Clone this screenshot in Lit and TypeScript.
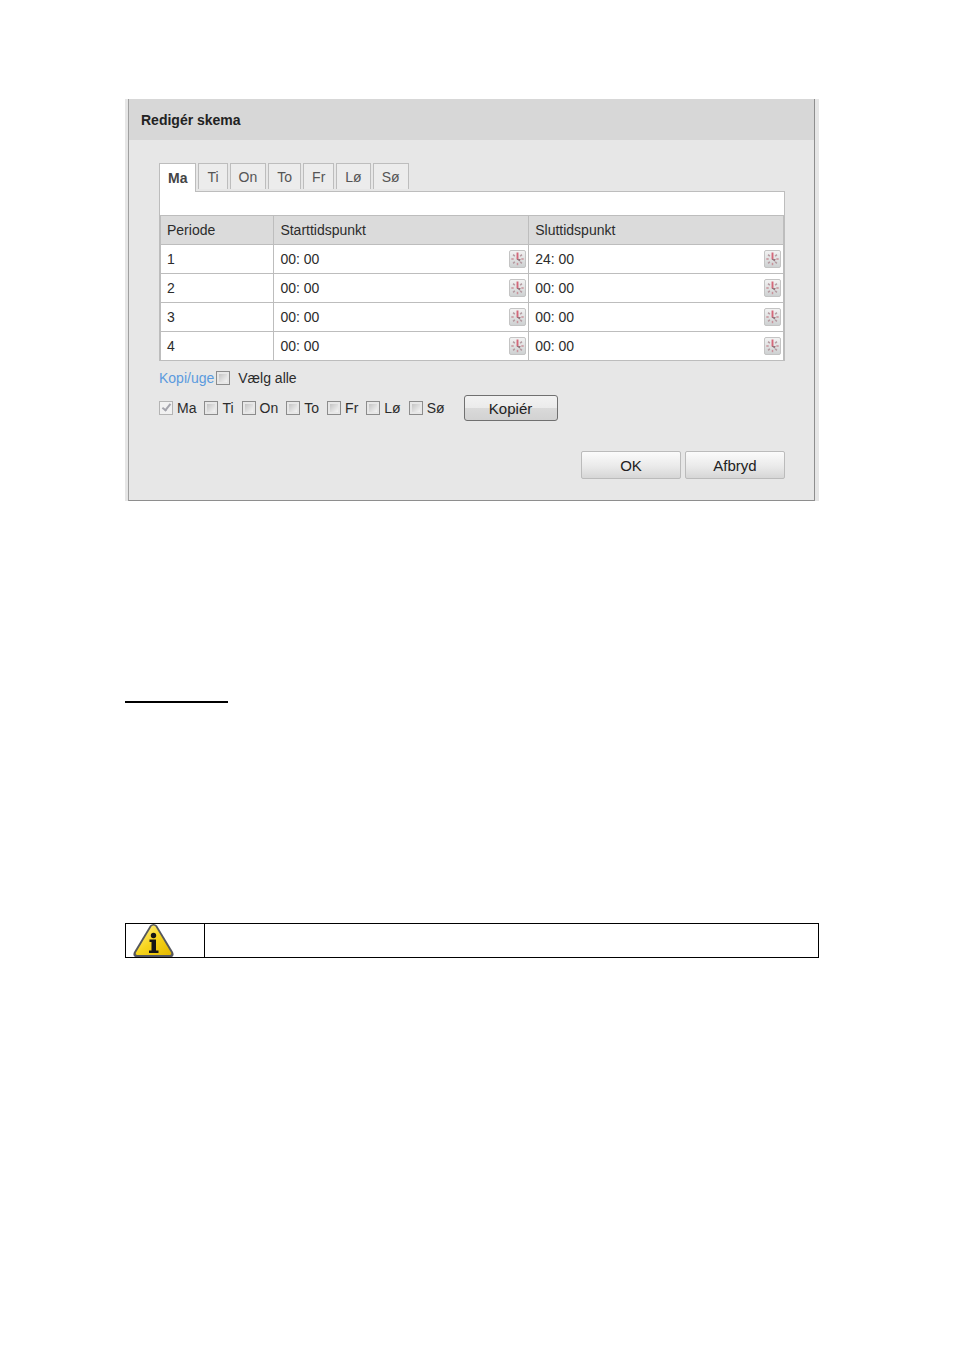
import { LitElement, html, css, svg } from "lit";
import { customElement, state } from "lit/decorators.js";

const DAYS = ["Ma", "Ti", "On", "To", "Fr", "Lø", "Sø"];

const PERIODS = [
  { id: 1, start: "00: 00", end: "24: 00" },
  { id: 2, start: "00: 00", end: "00: 00" },
  { id: 3, start: "00: 00", end: "00: 00" },
  { id: 4, start: "00: 00", end: "00: 00" },
];

const SPOKES = [45, 90, 135, 180, 225, 270, 315];

@customElement("time-field")
class TimeField extends LitElement {
  static properties = { value: {}, label: {} };
  declare value: string;
  declare label: string;

  static styles = css`
    :host {
      display: flex;
      align-items: center;
      height: 28px;
    }
    input {
      flex: 1;
      min-width: 0;
      padding: 0;
      border: 0;
      outline: 0;
      background: transparent;
      color: #2c2c2c;
      font: 14px "Liberation Sans", Arial, sans-serif;
    }
    button {
      display: block;
      flex: none;
      width: 17px;
      height: 18px;
      padding: 0;
      border: 0;
      background: none;
    }
    svg {
      display: block;
    }
  `;

  render() {
    return html`
      <input type="text" aria-label=${this.label} .value=${this.value} />
      <button type="button" aria-label="${this.label} ur">
        <svg width="17" height="18" viewBox="0 0 17 18">
          <defs>
            <linearGradient id="face" x1="0" y1="0" x2="0" y2="1">
              <stop offset="0" stop-color="#f3f3f3" />
              <stop offset="1" stop-color="#cdd0d1" />
            </linearGradient>
          </defs>
          <rect x=".5" y=".5" width="16" height="17" rx="1.5" fill="url(#face)" stroke="#c4c4c4" />
          ${SPOKES.map(
            (a) => svg`<path d="M8.500 2.800v2.400" transform="rotate(${a} 8.500 9)"
              stroke=${a % 90 === 0 ? "#c9929a" : "#b39aa0"} stroke-width="1.500" />`
          )}
          <path d="M8.500 2.500v7" stroke="#d4687a" stroke-width="1.900" fill="none" />
          <path d="M8 9.500h3.500M9 9.500l2 1.500" stroke="#96747c" stroke-width="1.200" fill="none" />
        </svg>
      </button>
    `;
  }
}

@customElement("app-root")
class AppRoot extends LitElement {
  @state() private activeDay = "Ma";

  static styles = css`
    :host {
      display: block;
      box-sizing: border-box;
      padding: 99px 135px 48px 125px;
      background: #fff;
      color: #2c2c2c;
      font: 14px/18px "Liberation Sans", Arial, sans-serif;
    }
    .backdrop {
      padding: 0 4px 0 3px;
      background: #e6e6e6;
    }
    .dialog {
      border: 1px solid #8e8e8e;
      border-left-color: #a0a0a0;
      border-top: 0;
      background: #e7e7e7;
    }
    .title {
      margin: 0;
      padding: 12px 12px 11px;
      background: #d7d7d7;
      color: #222;
      font-size: 14px;
      line-height: 18px;
    }
    .body {
      padding: 23px 29px 21px 30px;
    }
    .tabs {
      display: flex;
      gap: 2px;
    }
    .tab {
      height: 26px;
      padding: 0 8px;
      border: 1px solid #bdbdbd;
      border-bottom: 0;
      background: #ececec;
      color: #555;
      font: inherit;
    }
    .tab.active {
      height: 29px;
      margin-bottom: -1px;
      background: #fff;
      color: #444;
      font-weight: bold;
      z-index: 1;
    }
    .panel {
      padding-top: 23px;
      border: 1px solid #bdbdbd;
      background: #fff;
    }
    table {
      width: 100%;
      border-collapse: collapse;
      table-layout: fixed;
    }
    .schedule th,
    .schedule td {
      padding: 0 2px 0 6px;
      border: 1px solid #bdbdbd;
      border-bottom: 0;
      text-align: left;
    }
    .schedule th {
      height: 28px;
      background: #dbdbdb;
      font-weight: normal;
    }
    .period-col {
      width: 18.2%;
    }
    .copy {
      display: flex;
      align-items: center;
      margin-top: 8px;
    }
    .copy a {
      margin-right: 2px;
      color: #5b9ade;
      text-decoration: none;
    }
    .copy .choice {
      gap: 8px;
    }
    .days {
      display: flex;
      align-items: center;
      gap: 8px;
      margin-top: 8px;
    }
    .choice {
      display: flex;
      align-items: center;
      gap: 4px;
    }
    .choice input {
      appearance: none;
      display: block;
      width: 14px;
      height: 14px;
      margin: 0;
      border: 1px solid #8c8c8c;
      background: linear-gradient(135deg, #c4c4c4, #f4f4f4) content-box #f1f1f1;
      padding: 2px;
    }
    .choice input:disabled {
      border-color: #b4b4b4;
      background: #f1f1f1;
      padding: 0;
    }
    .choice input:checked::after {
      content: "";
      display: block;
      box-sizing: border-box;
      width: 5px;
      height: 9px;
      margin: 0 0 0 4px;
      border: solid #a4a4ac;
      border-width: 0 2px 2px 0;
      transform: rotate(38deg);
    }
    .push {
      padding: 0;
      border: 1px solid #bbb;
      border-radius: 2px;
      background: linear-gradient(#fbfbfb, #eaeaea 55%, #d6d6d6);
      color: #222;
      font: 15px "Liberation Sans", Arial, sans-serif;
    }
    .push.copy-button {
      width: 94px;
      height: 26px;
      margin-left: 11px;
      border-color: #707070;
      border-radius: 3px;
      background: linear-gradient(#f2f2f2, #ebebeb 50%, #dadada 50%, #d2d2d2);
    }
    .actions {
      display: flex;
      justify-content: flex-end;
      gap: 4px;
      margin-top: 30px;
    }
    .actions .push {
      width: 100px;
      height: 28px;
    }
    .rule {
      width: 103px;
      height: 2px;
      margin: 200px 0 220px;
      border: 0;
      background: #000;
    }
    .note td {
      height: 33px;
      padding: 0 0 0 7px;
      border: 1px solid #000;
    }
    .note .note-icon {
      width: 79px;
    }
    .note svg {
      display: block;
    }
  `;

  render() {
    return html`
      <div class="backdrop">
        <section class="dialog">
          <h2 class="title">Redigér skema</h2>
          <div class="body">
            <div class="tabs" role="tablist">
              ${DAYS.map(
                (d) => html`<button
                  type="button"
                  role="tab"
                  class=${d === this.activeDay ? "tab active" : "tab"}
                  aria-selected=${d === this.activeDay}
                  @click=${() => (this.activeDay = d)}
                >${d}</button>`
              )}
            </div>
            <div class="panel">
              <table class="schedule">
                <colgroup><col class="period-col" /><col /><col /></colgroup>
                <thead>
                  <tr><th>Periode</th><th>Starttidspunkt</th><th>Sluttidspunkt</th></tr>
                </thead>
                <tbody>
                  ${PERIODS.map(
                    (p) => html`<tr>
                      <td>${p.id}</td>
                      <td><time-field .value=${p.start} .label=${`Starttidspunkt ${p.id}`}></time-field></td>
                      <td><time-field .value=${p.end} .label=${`Sluttidspunkt ${p.id}`}></time-field></td>
                    </tr>`
                  )}
                </tbody>
              </table>
            </div>
            <div class="copy">
              <a href="#">Kopi/uge</a>
              <label class="choice"><input type="checkbox" />Vælg alle</label>
            </div>
            <div class="days">
              ${DAYS.map(
                (d) => html`<label class="choice"
                  ><input
                    type="checkbox"
                    ?checked=${d === this.activeDay}
                    ?disabled=${d === this.activeDay}
                  />${d}</label>`
              )}
              <button type="button" class="push copy-button">Kopiér</button>
            </div>
            <div class="actions">
              <button type="button" class="push">OK</button>
              <button type="button" class="push">Afbryd</button>
            </div>
          </div>
        </section>
      </div>
      <hr class="rule" />
      <table class="note">
        <colgroup><col class="note-icon" /><col /></colgroup>
        <tr>
          <td>
            <svg width="42" height="33" viewBox="0 0 42 33" role="img" aria-label="Info">
              <defs>
                <linearGradient id="sign" x1="0" y1="0" x2="1" y2="1">
                  <stop offset="0" stop-color="#fff3a0" />
                  <stop offset=".5" stop-color="#f7d51d" />
                  <stop offset="1" stop-color="#e3b800" />
                </linearGradient>
              </defs>
              <path d="M17 1.500Q20.500-1.500 24 1.500L40 28Q42 33 37 33H4Q-1 33 1 28Z" fill="#55575c" />
              <path d="M18.500 2.500Q20.500 .300 22.500 2.500L38 28.500Q39 31 36.500 31H4.500Q2 31 3 28.500Z" fill="url(#sign)" />
              <circle cx="20.500" cy="11.500" r="2.700" fill="#151515" />
              <path d="M16.500 15.500H23V26.500H25.500V29H16V26.500H18.500V18H16.500Z" fill="#151515" />
            </svg>
          </td>
          <td></td>
        </tr>
      </table>
    `;
  }
}
